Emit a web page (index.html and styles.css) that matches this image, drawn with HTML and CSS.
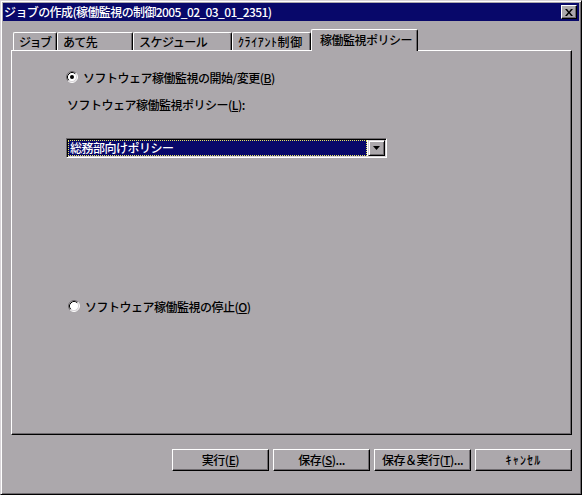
FILE: index.html
```html
<!DOCTYPE html>
<html lang="ja">
<head>
<meta charset="utf-8">
<title>ジョブの作成</title>
<link rel="stylesheet" href="styles.css">
</head>
<body>
<div class="window">
  <div class="titlebar">
    <span class="title">ジョブの作成(稼働監視の制御2005_02_03_01_2351)</span>
    <span class="close">
      <svg width="8" height="7" viewBox="0 0 8 7"><path d="M0 0h2l2 2.5L6 0h2L5 3.5 8 7H6L4 4.5 2 7H0l3-3.5z" fill="#000"/></svg>
    </span>
  </div>
  <div class="body">
    <div class="tabs">
      <div class="tab w1">ジョブ</div>
      <div class="tab w2">あて先</div>
      <div class="tab w3">スケジュール</div>
      <div class="tab w4">ｸﾗｲｱﾝﾄ制御</div>
      <div class="tab active w5">稼働監視ポリシー</div>
    </div>
    <div class="panel">
      <div class="radio-row r1">
        <svg class="radio" width="12" height="12" viewBox="0 0 12 12">
          <circle cx="6" cy="6" r="5" fill="#fff"/>
          <path d="M2.11 9.89A5.5 5.5 0 0 1 9.89 2.11" stroke="#6e6a6e" fill="none"/>
          <path d="M9.89 2.11A5.5 5.5 0 0 1 2.11 9.89" stroke="#fff" fill="none"/>
          <path d="M2.82 9.18A4.5 4.5 0 0 1 9.18 2.82" stroke="#000" fill="none"/>
          <path d="M9.18 2.82A4.5 4.5 0 0 1 2.82 9.18" stroke="#d8d4d8" fill="none"/>
          <circle cx="6" cy="6" r="2" fill="#000"/>
        </svg>
        <span>ソフトウェア稼働監視の開始/変更(<u>B</u>)</span>
      </div>
      <div class="label">ソフトウェア稼働監視ポリシー(<u>L</u>):</div>
      <div class="combo">
        <div class="combo-value">総務部向けポリシー</div>
        <div class="combo-btn">
          <svg width="7" height="4" viewBox="0 0 7 4"><path d="M0 0h7L3.5 4z" fill="#000"/></svg>
        </div>
      </div>
      <div class="radio-row r2">
        <svg class="radio" width="12" height="12" viewBox="0 0 12 12">
          <circle cx="6" cy="6" r="5" fill="#fff"/>
          <path d="M2.11 9.89A5.5 5.5 0 0 1 9.89 2.11" stroke="#6e6a6e" fill="none"/>
          <path d="M9.89 2.11A5.5 5.5 0 0 1 2.11 9.89" stroke="#fff" fill="none"/>
          <path d="M2.82 9.18A4.5 4.5 0 0 1 9.18 2.82" stroke="#000" fill="none"/>
          <path d="M9.18 2.82A4.5 4.5 0 0 1 2.82 9.18" stroke="#d8d4d8" fill="none"/>
        </svg>
        <span>ソフトウェア稼働監視の停止(<u>O</u>)</span>
      </div>
    </div>
    <div class="buttons">
      <button class="btn">実行(<u>E</u>)</button>
      <button class="btn">保存(<u>S</u>)...</button>
      <button class="btn">保存＆実行(<u>T</u>)...</button>
      <button class="btn half">ｷｬﾝｾﾙ</button>
    </div>
  </div>
</div>
</body>
</html>
```
FILE: styles.css
```css
* { box-sizing: border-box; }
html, body {
  margin: 0;
  padding: 0;
  background: #aca8ac;
}
body {
  font-family: "Noto Sans CJK JP", "Noto Sans", sans-serif;
  font-size: 12px;
  font-weight: 500;
  color: #000;
}
.window {
  width: 582px;
  height: 495px;
  background: #aca8ac;
  border-top: 1px solid #d8d4d8;
  border-left: 1px solid #d8d4d8;
  border-right: 1px solid #000;
  border-bottom: 1px solid #000;
  box-shadow: inset 1px 1px 0 #fff, inset -1px -1px 0 #6e6a6e;
  padding: 2px;
  display: flex;
  flex-direction: column;
}
.titlebar {
  height: 18px;
  background: #08086a;
  color: #fff;
  display: flex;
  align-items: center;
  justify-content: space-between;
  padding-left: 1px;
  padding-right: 2px;
}
.title {
  letter-spacing: -0.6px;
  line-height: 16px;
  white-space: nowrap;
}
.close {
  width: 16px;
  height: 14px;
  background: #aca8ac;
  border-top: 1px solid #fff;
  border-left: 1px solid #fff;
  border-right: 1px solid #000;
  border-bottom: 1px solid #000;
  box-shadow: inset -1px -1px 0 #6e6a6e;
  display: flex;
  align-items: center;
  justify-content: center;
}
.body {
  flex: 1;
  display: flex;
  flex-direction: column;
  padding: 8px 7px 0 8px;
}
.tabs {
  display: flex;
  align-items: flex-end;
  height: 21px;
  padding-left: 2px;
}
.tab {
  height: 18px;
  border-top: 1px solid #fff;
  border-left: 1px solid #fff;
  border-right: 1px solid #000;
  box-shadow: inset -1px 0 0 #6e6a6e;
  border-top-left-radius: 2px;
  border-top-right-radius: 2px;
  padding-left: 5px;
  line-height: 17px;
  letter-spacing: -0.5px;
  white-space: nowrap;
  background: #aca8ac;
}
.w1 { width: 44px; letter-spacing: -1.5px; }
.w2 { width: 76px; }
.w3 { width: 99px; }
.w4 { width: 79px; letter-spacing: 0.6px; }
.w5 { width: 107px; }
.tab.active {
  height: 22px;
  margin-bottom: -1px;
  position: relative;
  z-index: 1;
  padding-left: 8px;
  line-height: 19px;
}
.panel {
  height: 385px;
  border-top: 1px solid #fff;
  border-left: 1px solid #fff;
  border-right: 1px solid #000;
  border-bottom: 1px solid #000;
  box-shadow: inset -1px -1px 0 #6e6a6e;
  display: flex;
  flex-direction: column;
  padding-left: 54px;
}
.radio-row {
  display: flex;
  align-items: center;
  height: 16px;
  letter-spacing: -0.5px;
}
.radio {
  flex: none;
  margin-right: 5px;
}
.r1 { margin-top: 18px; }
.r2 { margin-top: 140px; padding-left: 2px; }
.label {
  margin-top: 12px;
  height: 16px;
  line-height: 16px;
  padding-left: 1px;
  letter-spacing: -0.5px;
}
.combo {
  margin-top: 25px;
  width: 321px;
  height: 20px;
  border-top: 1px solid #6e6a6e;
  border-left: 1px solid #6e6a6e;
  border-right: 1px solid #fff;
  border-bottom: 1px solid #fff;
  box-shadow: inset 1px 1px 0 #000, inset -1px -1px 0 #d8d4d8;
  padding: 1px;
  display: flex;
  background: #fff;
}
.combo-value {
  flex: 1;
  background: #08086a;
  border: 1px dotted #e8e860;
  color: #fff;
  line-height: 14px;
  padding-left: 1px;
  margin-right: 1px;
  letter-spacing: -0.5px;
  white-space: nowrap;
}
.combo-btn {
  width: 17px;
  flex: none;
  background: #aca8ac;
  border-top: 1px solid #d8d4d8;
  border-left: 1px solid #d8d4d8;
  border-right: 1px solid #000;
  border-bottom: 1px solid #000;
  box-shadow: inset 1px 1px 0 #fff, inset -1px -1px 0 #6e6a6e;
  display: flex;
  align-items: center;
  justify-content: center;
}
.buttons {
  display: flex;
  justify-content: flex-end;
  gap: 4px;
  margin-top: 14px;
}
.btn {
  width: 97px;
  height: 22px;
  font: inherit;
  letter-spacing: -0.5px;
  color: #000;
  background: #aca8ac;
  border-top: 1px solid #fff;
  border-left: 1px solid #fff;
  border-right: 1px solid #000;
  border-bottom: 1px solid #000;
  box-shadow: inset -1px -1px 0 #6e6a6e;
  padding: 0;
  line-height: 18px;
  border-radius: 0;
}
.btn.half { letter-spacing: 1.2px; }
u { text-decoration: underline; text-underline-offset: 1px; }
```
